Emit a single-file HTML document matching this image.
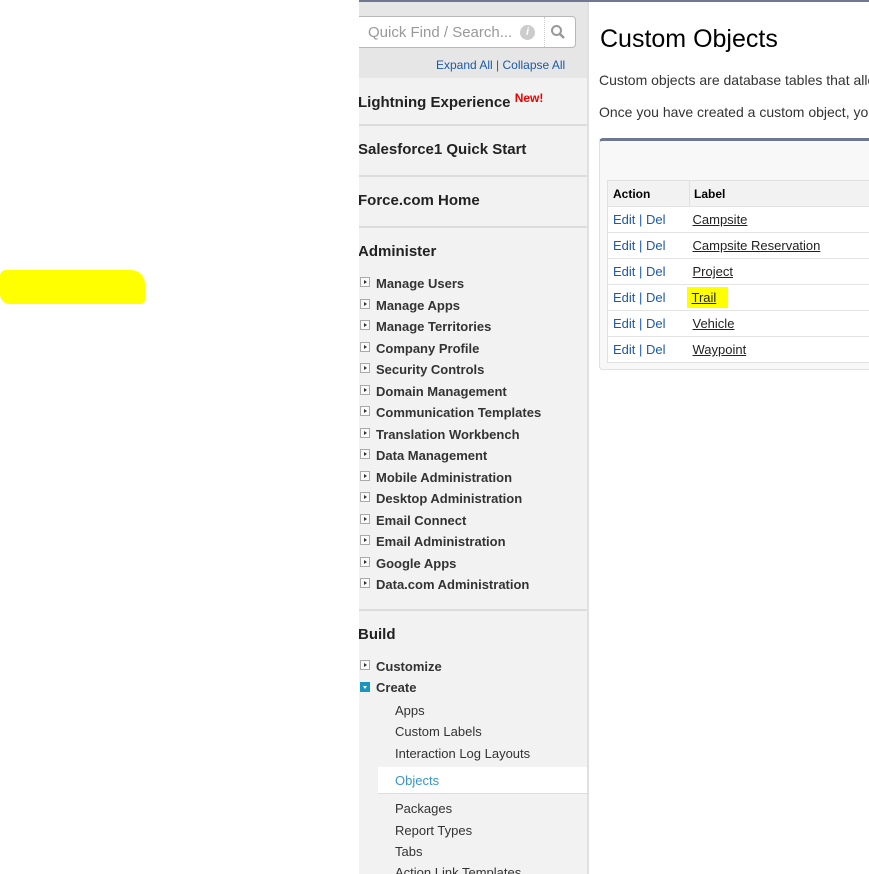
<!DOCTYPE html>
<html><head><style>
html,body{margin:0;width:869px;height:874px;overflow:hidden}
body{background:#fff;font-family:"Liberation Sans",Arial,sans-serif;position:relative}
.a{position:absolute}
#side{left:359px;top:0;width:228px;height:874px;background:#f2f2f2;border-right:2px solid #e0e0e0;overflow:hidden}
#top{left:359px;top:0;width:510px;height:2px;background:#6f7890}
.sec{position:absolute;left:0;width:228px;border-top:2px solid #dcdcdc}
.h{position:absolute;left:-1px;font-weight:bold;font-size:15px;color:#222}
.it{position:absolute;left:17px;font-weight:bold;font-size:13px;color:#333}
.ar{position:absolute;left:1px;width:8px;height:8px;border:1px solid #aaa;background:#fafafa}
.ar:after{content:"";position:absolute;left:3px;top:2px;border-left:3px solid #333;border-top:2px solid transparent;border-bottom:2px solid transparent}
.sub{position:absolute;left:36px;font-size:13px;color:#333}
table{border-collapse:collapse;font-size:13px}
td{height:25px;border-bottom:1px solid #e3e3e3;padding:0 0 0 5px}
a{color:#222;text-decoration:underline}
.e{color:#1b5aa8}
</style></head><body>
<div class="a" style="left:0;top:270px;width:145px;height:34px;background:#ffff00;border-radius:6px 14px 4px 10px"></div>
<div class="a" id="side">
 <div class="a" style="left:0;top:2px;width:228px;height:76px;background:#e6e6e6"></div>
 <div class="a" style="left:-12px;top:16px;width:227px;height:30px;background:#fff;border:1px solid #b8b8b8;border-radius:4px"></div>
 <div class="a" style="left:9px;top:24px;font-size:15px;color:#999">Quick Find / Search...</div>
 <div class="a" style="left:161px;top:25px;width:15px;height:15px;border-radius:50%;background:#ccc;color:#fff;font-size:11px;font-style:italic;font-weight:bold;text-align:center;line-height:15px">i</div>
 <div class="a" style="left:185px;top:17px;width:1px;height:30px;border-left:1px dotted #ccc"></div>
 <svg class="a" style="left:191px;top:24px" width="16" height="16"><circle cx="6.5" cy="6.5" r="4.5" fill="none" stroke="#999" stroke-width="2"/><line x1="10" y1="10" x2="14" y2="14" stroke="#999" stroke-width="2.5"/></svg>
 <div class="a" style="left:77px;top:58px;font-size:12px;color:#1b5aa8">Expand All | Collapse All</div>
 <div class="h" style="top:91px">Lightning Experience <span style="color:#e00;font-size:12px;vertical-align:5px">New!</span></div>
 <div class="sec" style="top:124px"></div>
 <div class="h" style="top:141px">Salesforce1 Quick Start</div>
 <div class="sec" style="top:175px"></div>
 <div class="h" style="top:192px">Force.com Home</div>
 <div class="sec" style="top:226px"></div>
 <div class="h" style="top:243px">Administer</div>
 <div id="adm"></div>
 <div class="sec" style="top:609px"></div>
 <div class="h" style="top:626px">Build</div>
 <div class="ar" style="top:660px"></div><div class="it" style="top:659px">Customize</div>
 <div class="a" style="left:1px;top:682px;width:10px;height:10px;background:#1797c0"></div>
 <div class="a" style="left:4px;top:686px;border-top:3px solid #fff;border-left:2px solid transparent;border-right:2px solid transparent"></div>
 <div class="it" style="top:680px">Create</div>
 <div class="sub" style="top:703px">Apps</div>
 <div class="sub" style="top:724px">Custom Labels</div>
 <div class="sub" style="top:746px">Interaction Log Layouts</div>
 <div class="a" style="left:19px;top:767px;width:211px;height:26px;background:#fff;border-bottom:1px solid #ddd"></div>
 <div class="sub" style="top:773px;color:#3a95c9">Objects</div>
 <div class="sub" style="top:801px">Packages</div>
 <div class="sub" style="top:823px">Report Types</div>
 <div class="sub" style="top:844px">Tabs</div>
 <div class="sub" style="top:865px">Action Link Templates</div>
</div>
<div class="a" id="top"></div>
<div class="a" style="left:600px;top:25px;font-size:25px;color:#000">Custom Objects</div>
<div class="a" style="left:599px;top:72px;width:270px;overflow:hidden;font-size:14px;color:#333;white-space:nowrap">Custom objects are database tables that allow you to store data</div>
<div class="a" style="left:599px;top:104px;width:270px;overflow:hidden;font-size:14px;color:#333;white-space:nowrap">Once you have created a custom object, you can create a tab</div>
<div class="a" style="left:599px;top:138px;width:290px;height:228px;background:#f8f8f8;border:1px solid #e0e0e0;border-top:3px solid #6f7890;border-radius:4px 0 0 4px"></div>
<table class="a" style="left:607px;top:180px;width:280px;background:#fff;border:1px solid #e0e0e0">
<tr style="background:#f2f2f2"><td style="width:76px;font-weight:bold;font-size:12px;height:22px;border-right:1px solid #e0e0e0">Action</td><td style="font-weight:bold;font-size:12px;padding-left:4px">Label</td></tr>
<tr><td class="e">Edit | Del</td><td style="padding-left:3px"><a>Campsite</a></td></tr>
<tr><td class="e">Edit | Del</td><td style="padding-left:3px"><a>Campsite Reservation</a></td></tr>
<tr><td class="e">Edit | Del</td><td style="padding-left:3px"><a>Project</a></td></tr>
<tr><td class="e">Edit | Del</td><td style="padding:0"><span style="background:#ffff00;padding:3px 12px 3px 5px;margin-left:-3px"><a>Trail</a></span></td></tr>
<tr><td class="e">Edit | Del</td><td style="padding-left:3px"><a>Vehicle</a></td></tr>
<tr><td class="e">Edit | Del</td><td style="padding-left:3px"><a>Waypoint</a></td></tr>
</table>
<script>
var n=["Manage Users","Manage Apps","Manage Territories","Company Profile","Security Controls","Domain Management","Communication Templates","Translation Workbench","Data Management","Mobile Administration","Desktop Administration","Email Connect","Email Administration","Google Apps","Data.com Administration"],h="";
n.forEach(function(t,i){var y=276+i*21.5;h+='<div class="ar" style="top:'+(y+1)+'px"></div><div class="it" style="top:'+y+'px">'+t+'</div>';});
document.getElementById("adm").outerHTML=h;
</script>
</body></html>
